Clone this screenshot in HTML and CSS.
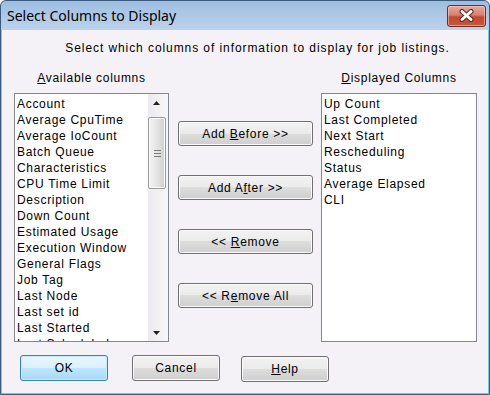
FILE: index.html
```html
<!DOCTYPE html>
<html lang="en">
<head>
  <meta charset="UTF-8">
  <title>Select Columns to Display</title>
  <link rel="stylesheet" href="styles.css">
</head>
<body>
  <div class="window">
    <div class="titlebar">
      <span class="title">Select Columns to Display</span>
      <div class="close">
        <svg width="17" height="13" viewBox="0 0 17 13">
          <path d="M4 2.5 L13 10.5 M13 2.5 L4 10.5" stroke="#5a2a22" stroke-width="5" stroke-linecap="round"/>
          <path d="M4 2.5 L13 10.5 M13 2.5 L4 10.5" stroke="#fff" stroke-width="3" stroke-linecap="round"/>
        </svg>
      </div>
    </div>

    <div class="client">
      <p class="intro">Select which columns of information to display for job listings.</p>

      <div class="picker">
        <div class="label"><u>A</u>vailable columns</div>
        <div></div>
        <div class="label"><u>D</u>isplayed Columns</div>

        <div class="listbox">
          <ul class="items">
            <li>Account</li>
            <li>Average CpuTime</li>
            <li>Average IoCount</li>
            <li>Batch Queue</li>
            <li>Characteristics</li>
            <li>CPU Time Limit</li>
            <li>Description</li>
            <li>Down Count</li>
            <li>Estimated Usage</li>
            <li>Execution Window</li>
            <li>General Flags</li>
            <li>Job Tag</li>
            <li>Last Node</li>
            <li>Last set id</li>
            <li>Last Started</li>
            <li>Last Scheduled</li>
          </ul>
          <div class="scrollbar">
            <div class="arrow">
              <svg width="7" height="4" viewBox="0 0 7 4"><path d="M0 4 L3.5 0 L7 4 Z" fill="#202020"/></svg>
            </div>
            <div class="track">
              <div class="thumb">
                <span class="grip"></span>
                <span class="grip"></span>
                <span class="grip"></span>
              </div>
            </div>
            <div class="arrow">
              <svg width="7" height="4" viewBox="0 0 7 4"><path d="M0 0 L7 0 L3.5 4 Z" fill="#202020"/></svg>
            </div>
          </div>
        </div>

        <div class="actions">
          <button class="btn">Add <u>B</u>efore &gt;&gt;</button>
          <button class="btn">Add A<u>f</u>ter &gt;&gt;</button>
          <button class="btn">&lt;&lt; <u>R</u>emove</button>
          <button class="btn">&lt;&lt; R<u>e</u>move All</button>
        </div>

        <div class="listbox">
          <ul class="items">
            <li>Up Count</li>
            <li>Last Completed</li>
            <li>Next Start</li>
            <li>Rescheduling</li>
            <li>Status</li>
            <li>Average Elapsed</li>
            <li>CLI</li>
          </ul>
        </div>
      </div>

      <div class="footer">
        <button class="btn default">OK</button>
        <button class="btn">Cancel</button>
        <button class="btn help"><u>H</u>elp</button>
      </div>
    </div>
  </div>
</body>
</html>
```

FILE: styles.css
```css
body {
  margin: 0;
  font-family: "Liberation Sans", Arial, sans-serif;
  font-size: 12px;
  letter-spacing: 0.7px;
  color: #000;
}
.window {
  width: 490px;
  height: 395px;
  box-sizing: border-box;
  border: 1px solid #3b5b7c;
  border-radius: 6px 6px 0 0;
  background: linear-gradient(#9fbee0, #bbd3ec 29px, #69cdf1 29px);
  display: flex;
  flex-direction: column;
}
.titlebar {
  height: 29px;
  flex: none;
  display: flex;
  align-items: center;
  justify-content: space-between;
  padding: 0 3px 0 6px;
}
.title {
  font-family: "Noto Sans", sans-serif;
  font-size: 14px;
  letter-spacing: 0;
  color: #000;
}
.close {
  width: 37px;
  height: 20px;
  border: 1px solid #6e2d24;
  border-radius: 3px;
  background: linear-gradient(#eaa99b, #d7806d 45%, #c4482f 55%, #c9553b);
  box-shadow: inset 0 0 0 1px rgba(255, 220, 210, 0.5);
  display: flex;
  align-items: center;
  justify-content: center;
}
.client {
  flex: 1;
  margin: 0 1px 1px;
  background: #f5f2f7;
  padding: 11px 11px 0 12px;
}
.intro {
  margin: 0;
  line-height: 14px;
  letter-spacing: 0.92px;
  text-align: center;
  padding-left: 24px;
}
.picker {
  margin-top: 16px;
  display: grid;
  grid-template-columns: 155px 1fr 156px;
  grid-template-rows: 14px 249px;
  row-gap: 8px;
}
.label {
  line-height: 14px;
  text-align: center;
}
.listbox {
  border: 1px solid #828790;
  background: #fff;
  display: flex;
  overflow: hidden;
}
.items {
  flex: 1;
  list-style: none;
  margin: 0;
  padding: 2px 0 0 2px;
  line-height: 16px;
  white-space: nowrap;
}
.scrollbar {
  width: 20px;
  background: linear-gradient(90deg, #eceaee, #f7f6f8);
  display: flex;
  flex-direction: column;
}
.arrow {
  height: 17px;
  display: flex;
  align-items: center;
  justify-content: center;
  padding-right: 3px;
}
.track {
  flex: 1;
  padding: 6px 2px 0 0;
}
.thumb {
  height: 70px;
  border: 1px solid #9a9a9a;
  border-radius: 2px;
  background: linear-gradient(90deg, #f4f4f4, #e4e4e4 50%, #cfcfcf);
  box-shadow: inset 0 0 0 1px #fbfbfb;
  display: flex;
  flex-direction: column;
  align-items: center;
  justify-content: center;
  gap: 2px;
}
.grip {
  width: 7px;
  height: 1px;
  background: #7d7d7d;
}
.actions {
  padding: 28px 8px 0 9px;
  display: flex;
  flex-direction: column;
  gap: 29px;
}
.btn {
  font: inherit;
  letter-spacing: inherit;
  color: #000;
  height: 25px;
  padding: 0;
  border: 1px solid #707070;
  border-radius: 3px;
  background: linear-gradient(#f2f2f2, #ebebeb 50%, #dddddd 50%, #cfcfcf);
  box-shadow: inset 0 0 0 1px #fbfbfb;
}
.footer {
  margin-top: 13px;
  padding-left: 6px;
  display: flex;
  align-items: flex-start;
  gap: 21px;
}
.footer .btn {
  width: 88px;
  height: 26px;
}
.footer .default {
  margin-right: 3px;
  border-color: #3c7fb1;
  background: linear-gradient(#eaf6fd, #d9f0fc 50%, #bee6fd 50%, #a7d9f5);
  box-shadow: inset 0 0 0 1px #c5ebfd;
}
.footer .help {
  margin-top: 1px;
}
```
